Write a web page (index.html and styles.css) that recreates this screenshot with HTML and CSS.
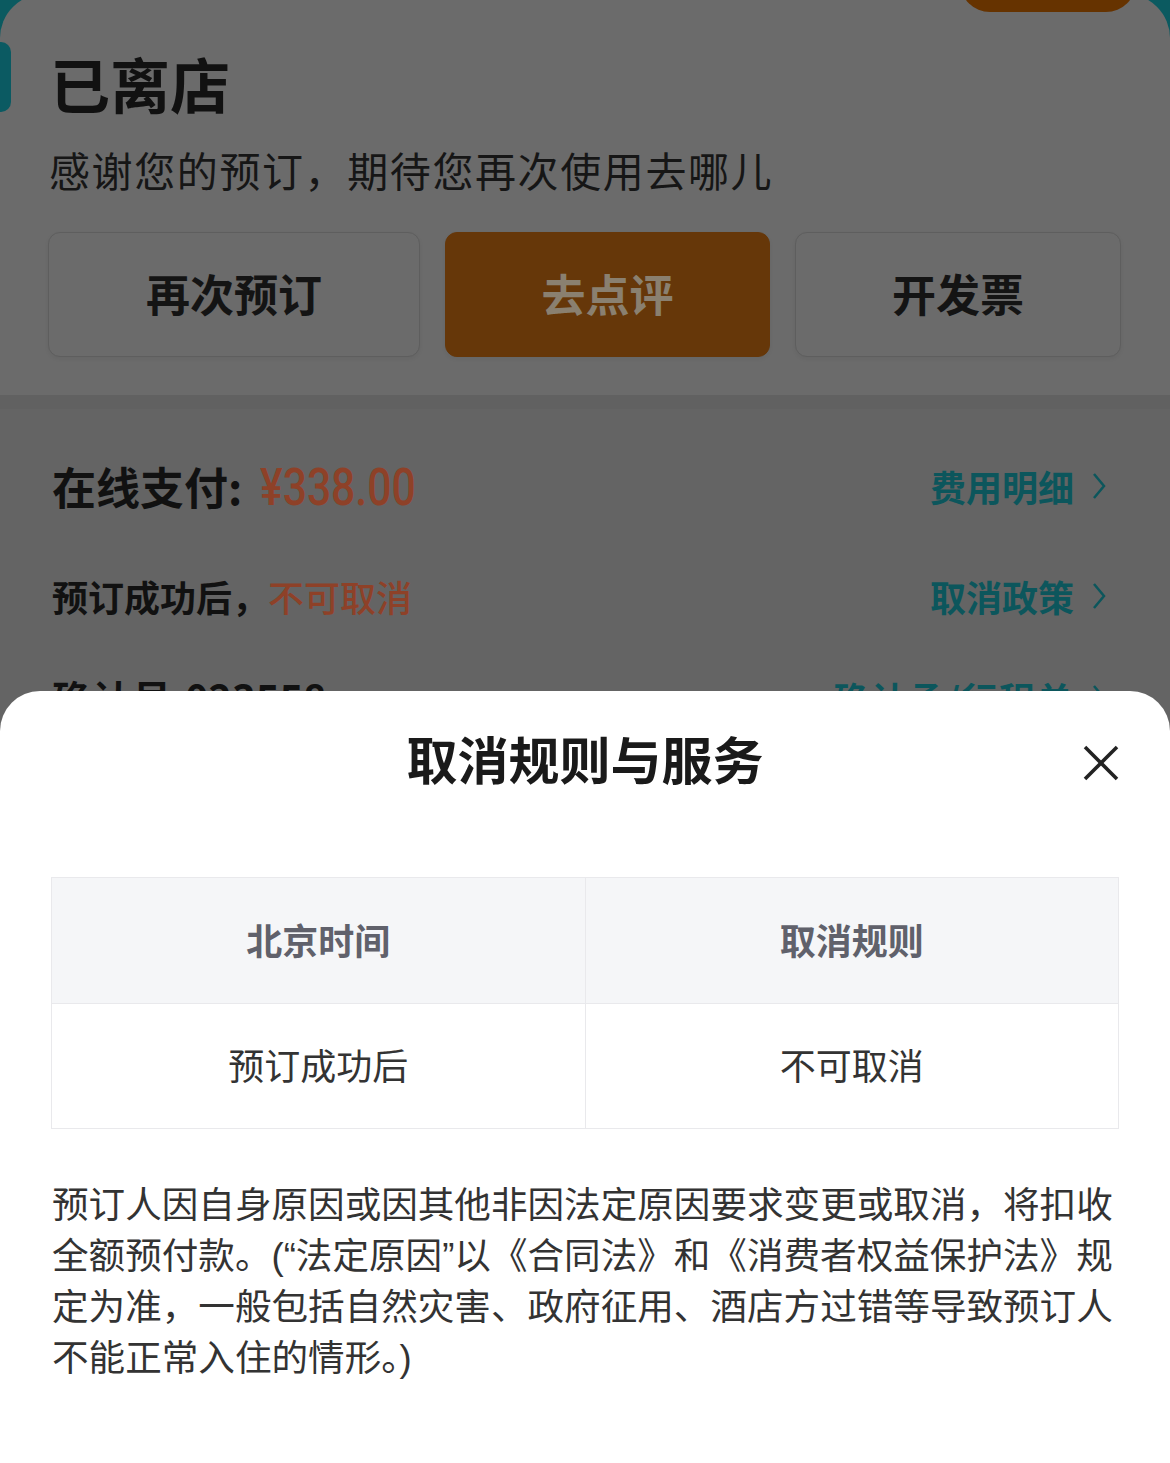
FILE: index.html
```
<!DOCTYPE html>
<html lang="zh-CN">
<head>
<meta charset="utf-8">
<link rel="stylesheet" href="styles.css">
</head>
<body>
<div class="screen">
  <div class="top-pill"></div>
  <section class="status-card">
    <span class="status-mark"></span>
    <h1 class="status-title">已离店</h1>
    <p class="status-sub">感谢您的预订，期待您再次使用去哪儿</p>
    <div class="actions">
      <div class="btn">再次预订</div>
      <div class="btn btn-primary">去点评</div>
      <div class="btn">开发票</div>
    </div>
  </section>
  <div class="divider"></div>
  <section class="info">
    <div class="info-row row-pay">
      <div class="info-left"><span class="pay-label">在线支付:</span><span class="price">¥338.00</span></div>
      <div class="link">费用明细<svg class="chev" viewBox="0 0 14 28"><polyline points="2,2 12,14 2,26"/></svg></div>
    </div>
    <div class="info-row">
      <div class="info-left"><span class="lbl">预订成功后，</span><span class="warn">不可取消</span></div>
      <div class="link">取消政策<svg class="chev" viewBox="0 0 14 28"><polyline points="2,2 12,14 2,26"/></svg></div>
    </div>
    <div class="info-row row-confirm">
      <div class="info-left"><span class="confirm-label">确认号:023558</span></div>
      <div class="link link-wide">确认函/行程单<svg class="chev" viewBox="0 0 14 28"><polyline points="2,2 12,14 2,26"/></svg></div>
    </div>
  </section>

  <div class="sheet">
    <div class="sheet-head">
      <h2 class="sheet-title">取消规则与服务</h2>
      <svg class="close" viewBox="0 0 36 36"><line x1="2" y1="2" x2="34" y2="34"/><line x1="34" y1="2" x2="2" y2="34"/></svg>
    </div>
    <table class="rules">
      <thead>
        <tr><th>北京时间</th><th>取消规则</th></tr>
      </thead>
      <tbody>
        <tr><td>预订成功后</td><td>不可取消</td></tr>
      </tbody>
    </table>
    <p class="note">预订人因自身原因或因其他非因法定原因要求变更或取消，将扣收全额预付款。(“法定原因”以《合同法》和《消费者权益保护法》规定为准，一般包括自然灾害、政府征用、酒店方过错等导致预订人不能正常入住的情形。)</p>
  </div>
</div>
</body>
</html>
```
FILE: styles.css
```
* { box-sizing: border-box; }
html, body { margin: 0; padding: 0; }
body {
  width: 1170px;
  height: 1463px;
  overflow: hidden;
  background: #646464;
  font-family: "Noto Sans CJK SC", "Noto Sans", sans-serif;
}
.screen {
  position: relative;
  width: 1170px;
  height: 1463px;
  overflow: hidden;
  background: linear-gradient(#0b5a60 0, #0b5a60 60px, #646464 60px);
}
.top-pill {
  position: absolute;
  left: 960px;
  top: -40px;
  width: 176px;
  height: 52px;
  border-radius: 0 0 30px 30px;
  background: #663300;
  z-index: 2;
}
.status-card {
  position: relative;
  margin-top: -6px;
  padding: 54px 0 0 48px;
  height: 401px;
  background: #6b6b6b;
  border-radius: 44px 44px 0 0;
}
.status-mark {
  position: absolute;
  left: 0;
  top: 48px;
  width: 11px;
  height: 70px;
  border-radius: 0 10px 10px 0;
  background: #0b5a62;
}
.status-title {
  margin: 0 0 0 2px;
  font-size: 60px;
  line-height: 70px;
  font-weight: 700;
  color: #111;
}
.status-sub {
  margin: 26px 0 0 1px;
  font-size: 41px;
  line-height: 50px;
  letter-spacing: 1.6px;
  font-weight: 400;
  color: #161616;
}
.actions {
  display: grid;
  grid-template-columns: 372px 325px 326px;
  gap: 25px;
  margin-top: 38px;
}
.btn {
  height: 125px;
  border-radius: 12px;
  background: #6b6b6b;
  border: 1.5px solid #5e5e5e;
  box-shadow: 0 2px 4px rgba(0,0,0,0.05);
  display: flex;
  align-items: center;
  justify-content: center;
  padding-bottom: 4px;
  font-size: 44px;
  font-weight: 700;
  color: #141414;
}
.btn-primary {
  background: #663709;
  border-color: #663709;
  color: #8a8070;
}
.divider {
  height: 14px;
  background: #616161;
}
.info {
  padding: 0 64px 0 52px;
}
.info-row {
  height: 110px;
  display: flex;
  align-items: center;
  justify-content: space-between;
}
.row-pay { margin-top: 22px; }
.row-confirm { margin-top: -8px; }
.info-left { display: flex; align-items: baseline; }
.pay-label {
  font-size: 44px;
  font-weight: 700;
  color: #111;
}
.confirm-label {
  font-size: 40px;
  font-weight: 700;
  color: #111;
}
.price {
  display: inline-block;
  margin-left: 18px;
  font-family: "Roboto", "Noto Sans", sans-serif;
  font-size: 52px;
  font-weight: 500;
  color: #8e4128;
  transform: scaleX(0.82);
  transform-origin: left center;
}
.lbl {
  font-size: 36px;
  font-weight: 700;
  color: #111;
}
.warn {
  font-size: 36px;
  font-weight: 500;
  color: #8e4128;
}
.link {
  display: flex;
  align-items: center;
  gap: 18px;
  font-size: 36px;
  font-weight: 700;
  color: #0c565c;
}
.link-wide { letter-spacing: 1.5px; }
.chev {
  width: 14px;
  height: 28px;
  fill: none;
  stroke: #0c565c;
  stroke-width: 2.5;
}
.sheet {
  position: absolute;
  left: 0;
  top: 691px;
  width: 1170px;
  bottom: 0;
  background: #fff;
  border-radius: 40px 40px 0 0;
  padding: 0 51px;
  z-index: 3;
}
.sheet-head {
  position: relative;
  padding-top: 32px;
}
.sheet-title {
  margin: 0;
  text-align: center;
  font-size: 51px;
  line-height: 70px;
  font-weight: 700;
  color: #1a1a1a;
}
.close {
  position: absolute;
  right: 0;
  top: 54px;
  width: 36px;
  height: 36px;
  stroke: #222;
  stroke-width: 3.6;
}
.rules {
  margin-top: 84px;
  width: 1068px;
  border-collapse: collapse;
  table-layout: fixed;
}
.rules th, .rules td {
  width: 50%;
  border: 1.5px solid #e9e9ec;
  text-align: center;
  font-size: 36px;
  padding-bottom: 5px;
}
.rules th {
  height: 126px;
  background: #f5f6f8;
  font-weight: 700;
  color: #60616b;
}
.rules td {
  height: 125px;
  font-weight: 400;
  color: #333;
}
.note {
  margin: 51px 0 0 1px;
  font-family: "Liberation Sans", "Noto Sans CJK SC", sans-serif;
  font-size: 36.6px;
  line-height: 51px;
  color: #333;
}
```
